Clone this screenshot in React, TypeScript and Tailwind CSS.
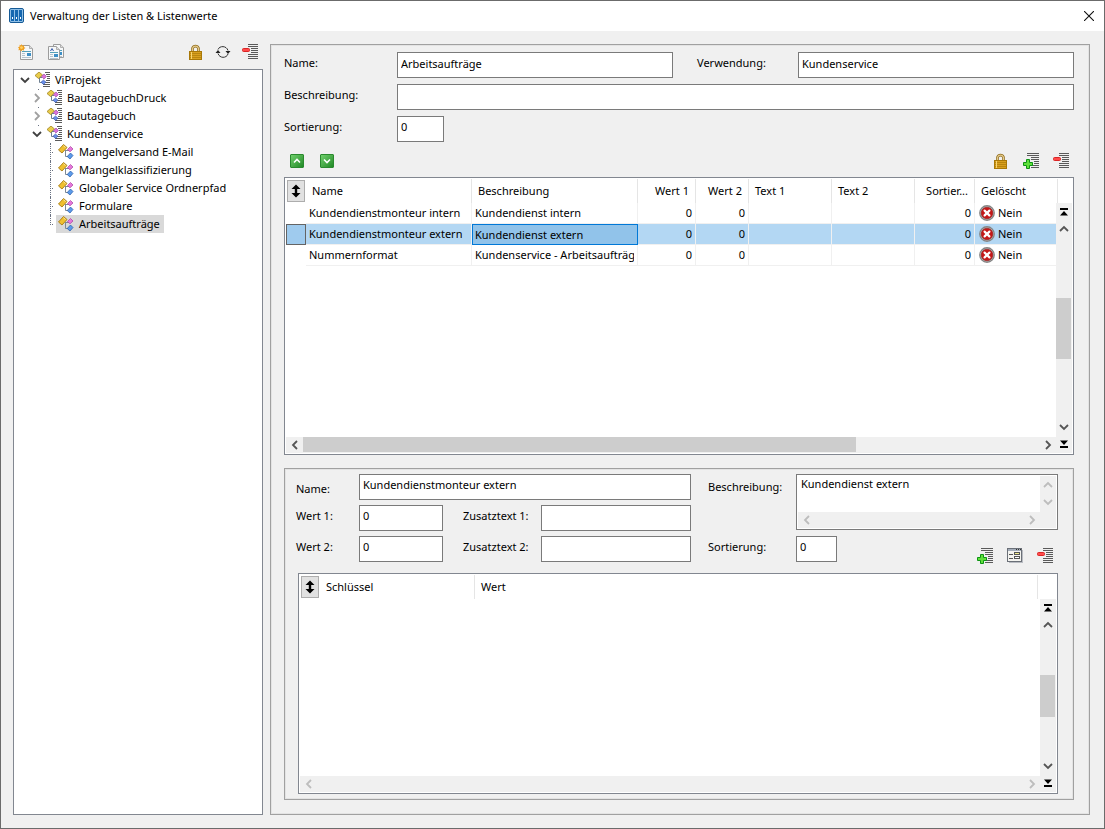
import { FC, ReactNode } from "react";

type Direction = "up" | "down" | "left" | "right";

interface TreeNode {
  label: string;
  level: number;
  open?: boolean;
  active?: boolean;
}

interface ListValue {
  name: string;
  desc: string;
  active?: boolean;
}

const nodes: TreeNode[] = [
  { label: "ViProjekt", level: 0, open: true },
  { label: "BautagebuchDruck", level: 1 },
  { label: "Bautagebuch", level: 1 },
  { label: "Kundenservice", level: 1, open: true },
  { label: "Mangelversand E-Mail", level: 2 },
  { label: "Mangelklassifizierung", level: 2 },
  { label: "Globaler Service Ordnerpfad", level: 2 },
  { label: "Formulare", level: 2 },
  { label: "Arbeitsaufträge", level: 2, active: true },
];

const values: ListValue[] = [
  { name: "Kundendienstmonteur intern", desc: "Kundendienst intern" },
  { name: "Kundendienstmonteur extern", desc: "Kundendienst extern", active: true },
  { name: "Nummernformat", desc: "Kundenservice - Arbeitsaufträge" },
];

/* Icons */

const AppIcon = () => (
  <svg width="16" height="16" viewBox="0 0 16 16">
    <rect x="0.5" y="0.5" width="14" height="14" rx="1.5" fill="#8fbfe6" stroke="#155a96" />
    {[2, 6, 10].map((x) => (
      <g key={x}>
        <rect x={x} y="2" width="3" height="11" fill="#1467b0" />
        <rect x={x + 1} y="9" width="1" height="2" fill="#fff" />
      </g>
    ))}
  </svg>
);

const CloseIcon = () => (
  <svg width="10" height="10" viewBox="0 0 10 10">
    <path d="M0 0L10 10M10 0L0 10" stroke="#111" strokeWidth="1.1" />
  </svg>
);

const Page: FC<{ x: number; y: number; w: number; h: number }> = ({ x, y, w, h }) => (
  <g>
    <path
      d={`M${x + 0.5} ${y + 0.5}h${w - 4}l3 3v${h - 4}h-${w - 1}z`}
      fill="#f6f8f9"
      stroke="#9c9c9c"
    />
    <path d={`M${x + w - 3.5} ${y + 0.5}v3h3`} fill="#ddd" stroke="#b0b0b0" />
    <path d={`M${x + 2} ${y + 6.5}h${w - 4}`} stroke="#56a0b8" />
    <path d={`M${x + 2} ${y + 8.5}h3M${x + 2} ${y + 10.5}h3M${x + 2} ${y + 12.5}h${w - 4}`} stroke="#b5c3cc" />
    <rect x={x + w - 6} y={y + 8} width="4" height="3" fill="#3d8fc6" />
  </g>
);

const NewListIcon = () => (
  <svg width="16" height="16" viewBox="0 0 16 16">
    <Page x={2} y={1} w={13} h={15} />
    <path
      d="M3.5 0L4.4 1.8L6.4 1.2L5.9 3.1L7.5 4L5.9 5L6.2 6.8L4.4 6.1L3.2 7.5L2.4 5.9L0.4 6.2L1 4.4L0 3.2L1.7 2.4L1.5 0.8L2.9 1.4z"
      fill="#f0a020"
    />
    <circle cx="3.5" cy="3.6" r="1.4" fill="#ffd265" />
  </svg>
);

const CopyListIcon = () => (
  <svg width="16" height="16" viewBox="0 0 16 16">
    <Page x={5} y={0} w={11} h={14} />
    <Page x={0} y={2} w={12} h={14} />
    <path d="M2.5 7l1.5-2.5L5.5 7" stroke="#3558a8" fill="none" />
  </svg>
);

const LockIcon = () => (
  <svg width="16" height="16" viewBox="0 0 16 16">
    <path d="M4.5 8V4.2a3.2 3.2 0 0 1 6 0V8" fill="none" stroke="#8f6a1a" strokeWidth="2.6" />
    <path d="M4.5 8V4.2a3.2 3.2 0 0 1 6 0V8" fill="none" stroke="#e2c98a" strokeWidth="1.2" />
    <rect x="1.5" y="7.5" width="12" height="8" fill="#d9a01f" stroke="#a87808" />
    <path d="M2 9.5h11M2 11.5h11M2 13.5h11" stroke="#b9860f" />
    <path d="M3.500 8v7" stroke="#f7d673" />
  </svg>
);

const RefreshIcon = () => (
  <svg width="16" height="16" viewBox="0 0 16 16" fill="none">
    <path d="M3 5.5C4.5 1.5 11.5 1.500 13 6.5M13 10C11.5 14.5 4.5 14.5 3 9.5" stroke="#333" />
    <path d="M10.500 7h5l-2.500 3zM5.500 9h-5l2.500-3z" fill="#222" />
  </svg>
);

// left edge of each line, from the top down
const Lines: FC<{ starts: number[]; end?: number; color?: string }> = ({
  starts,
  end = 16,
  color = "#5a5a5a",
}) => (
  <path d={starts.map((x, i) => `M${x} ${i * 2 + 0.5}H${end}`).join("")} stroke={color} />
);

const RemoveIcon = () => (
  <svg width="16" height="16" viewBox="0 0 16 16">
    <Lines starts={[6, 6, 9, 9, 9, 6, 6, 6]} />
    <rect x="0.5" y="4.5" width="7" height="3" rx="1" fill="#ff4a4a" stroke="#d92626" />
  </svg>
);

const AddIcon = () => (
  <svg width="16" height="16" viewBox="0 0 16 16">
    <Lines starts={[4, 4, 8, 8, 11, 11, 8, 8]} />
    <path
      d="M3.5 6.5h3v3h3v3h-3v3h-3v-3h-3v-3h3z"
      fill="#5fe03a"
      stroke="#0d9414"
      strokeLinejoin="round"
    />
  </svg>
);

const FormIcon = () => (
  <svg width="16" height="16" viewBox="0 0 16 16">
    <rect x="2" y="2" width="14" height="13" fill="#b9bcc2" />
    <rect x="0.5" y="0.5" width="14" height="13" fill="#f4f4f0" stroke="#6b7078" />
    <rect x="1" y="1" width="13" height="2" fill="#a4adba" />
    <path d="M9 1.5h1M11 1.5h1M13 1.5h1" stroke="#333" />
    <path d="M2 6.5h4M2 10.5h4" stroke="#555" />
    <rect x="7.5" y="4.5" width="5" height="2" fill="#f5ef8e" stroke="#555" />
    <rect x="7.5" y="8.500" width="5" height="2" fill="#fff" stroke="#555" />
  </svg>
);

const GroupIcon = () => (
  <svg width="16" height="16" viewBox="0 0 16 16" fill="none">
    <Lines starts={[10, 11, 12, 12, 11, 10, 8, 8]} end={15} />
    <path d="M4.5 6v4.5H7M5 5.5h2" stroke="#6d7f91" />
    <path d="M4 0L7.5 3L3.5 6.5L0 3.5z" fill="#e9cc4a" stroke="#a08420" strokeWidth="0.8" />
    <path d="M9 2L11.5 4.5L9 7L6.5 4.5z" fill="#d873d8" stroke="#9a3fa4" strokeWidth="0.6" />
    <path d="M8.5 8L11 10.2L8.5 12.4L6 10.2z" fill="#6a8ee8" stroke="#3558a8" strokeWidth="0.6" />
  </svg>
);

const LeafIcon = () => (
  <svg width="16" height="16" viewBox="0 0 16 16" fill="none">
    <path d="M7.5 6v6.5H10M7.5 6.5H11" stroke="#7d8894" />
    <path d="M5.5 0.5L9 3.5L4 9L0.5 6z" fill="#efc02f" stroke="#a87c10" strokeWidth="0.9" />
    <path d="M5.5 1.8L7.5 3.5" stroke="#fbe9a0" />
    <path d="M12.5 2.5L15 5L12 7.8L9.5 5.5z" fill="#e678dc" stroke="#a840a0" strokeWidth="0.7" />
    <path d="M12.5 9L15 11.5L12 15L9.2 12.5z" fill="#5c9bea" stroke="#2358a8" strokeWidth="0.7" />
  </svg>
);

const NoIcon = () => (
  <svg width="16" height="16" viewBox="0 0 16 16">
    <circle cx="8" cy="8" r="7.2" fill="#d0d0d0" stroke="#858585" strokeWidth="1.4" />
    <circle cx="8" cy="8" r="5.8" fill="#c41818" stroke="#8d1010" strokeWidth="0.6" />
    <path d="M5.6 5.6L10.4 10.4M10.4 5.6L5.6 10.4" stroke="#fff" strokeWidth="2.2" strokeLinecap="round" />
  </svg>
);

const SortIcon = () => (
  <svg width="10" height="14" viewBox="0 0 10 14">
    <path d="M5 0.5L9.5 5H6.2V9H9.5L5 13.5L0.5 9H3.8V5H0.5z" fill="#000" />
  </svg>
);

const chevrons: Record<Direction, string> = {
  up: "M1 7L5 3L9 7",
  down: "M1 3L5 7L9 3",
  left: "M7 1L3 5L7 9",
  right: "M3 1L7 5L3 9",
};

const Chevron: FC<{ dir: Direction; color?: string }> = ({ dir, color = "#555" }) => (
  <svg width="10" height="10" viewBox="0 0 10 10" fill="none">
    <path d={chevrons[dir]} stroke={color} strokeWidth="1.8" />
  </svg>
);

const EdgeIcon: FC<{ end?: boolean }> = ({ end }) => (
  <svg width="8" height="8" viewBox="0 0 8 8">
    {end ? (
      <path d="M0 0.5h8L4 5zM0 6h8v2H0z" fill="#000" />
    ) : (
      <path d="M0 0h8v2H0zM4 3L8 7.5H0z" fill="#000" />
    )}
  </svg>
);

/* Controls */

const IconButton: FC<{ label: string; children: ReactNode }> = ({ label, children }) => (
  <button type="button" aria-label={label} className="flex size-4 items-center justify-center">
    {children}
  </button>
);

const MoveButton: FC<{ label: string; dir: Direction }> = ({ label, dir }) => (
  <button
    type="button"
    aria-label={label}
    className="flex size-3.5 items-center justify-center rounded-[1px] border border-[#2a8a2e] bg-linear-to-br from-[#6fd06c] to-[#1e8a25]"
  >
    <svg width="10" height="10" viewBox="0 0 10 10" fill="none">
      <path d={dir === "up" ? "M2 6.5L5 3.5L8 6.5" : "M2 3.5L5 6.5L8 3.5"} stroke="#fff" strokeWidth="1.6" />
    </svg>
  </button>
);

interface FieldProps {
  id: string;
  value?: string;
  className?: string;
}

const Field: FC<FieldProps> = ({ id, value = "", className = "w-full pb-1" }) => (
  <input
    id={id}
    type="text"
    defaultValue={value}
    className={`h-[26px] min-w-0 border border-[#7a7a7a] bg-white px-[3px] outline-none ${className}`}
  />
);

const ScrollButton: FC<{ dir: Direction; disabled?: boolean }> = ({ dir, disabled }) => (
  <button
    type="button"
    aria-label={dir}
    disabled={disabled}
    className="flex h-4 w-[15px] shrink-0 items-center justify-center"
  >
    <Chevron dir={dir} color={disabled ? "#bdbdbd" : "#555"} />
  </button>
);

const HorizontalBar: FC<{ disabled?: boolean }> = ({ disabled }) => (
  <div className="flex h-4 bg-[#f0f0f0] px-px">
    <ScrollButton dir="left" disabled={disabled} />
    <div className="flex-1 pl-px">
      {!disabled && <div className="h-[15px] w-3/4 bg-[#cdcdcd]" />}
    </div>
    <ScrollButton dir="right" disabled={disabled} />
  </div>
);

const VerticalBar: FC<{ thumb: string }> = ({ thumb }) => (
  <div className="flex flex-1 flex-col bg-[#f0f0f0]">
    <button type="button" aria-label="Anfang" className="flex h-[18px] items-center justify-center">
      <EdgeIcon />
    </button>
    <ScrollButton dir="up" />
    <div className="flex w-full flex-1 items-center">
      <div className={`w-[15px] bg-[#cdcdcd] ${thumb}`} />
    </div>
    <ScrollButton dir="down" />
    <button type="button" aria-label="Ende" className="flex h-[18px] items-center justify-center">
      <EdgeIcon end />
    </button>
  </div>
);

const SortButton = () => (
  <button
    type="button"
    aria-label="Sortieren"
    className="flex h-[22px] w-[18px] items-center justify-center border border-[#adadad] bg-[#e1e1e1]"
  >
    <SortIcon />
  </button>
);

/* Tree */

const indents = ["pl-1.5", "pl-[18px]", "pl-[36px]"];

const TreeItem: FC<{ node: TreeNode }> = ({ node }) => (
  <li className={`flex h-[18px] items-stretch ${indents[node.level]}`}>
    {node.level < 2 ? (
      <button type="button" aria-label={node.label} className="relative flex w-[15px] items-center">
        {node.level === 1 && <span className="absolute top-0 left-1.5 size-px bg-gray-500" />}
        <Chevron dir={node.open ? "down" : "right"} color={node.open ? "#404040" : "#a0a0a0"} />
      </button>
    ) : (
      <span className="flex w-1.5">
        <span className={`border-l border-dotted border-gray-500 ${node.active ? "h-2.5" : "h-full"}`} />
        <span className="mt-[9px] ml-px size-px bg-gray-500" />
      </span>
    )}
    <span className={`flex items-center gap-1 pr-1 ${node.active ? "bg-[#d9d9d9]" : ""}`}>
      {node.level < 2 ? (
        <GroupIcon />
      ) : (
        <span className="pr-px pl-0.5">
          <LeafIcon />
        </span>
      )}
      <a href="#" className="whitespace-nowrap">
        {node.label}
      </a>
    </span>
  </li>
);

/* Tables */

const th = "border-r border-[#e5e5e5] px-1.5 text-left font-normal";
const td = "overflow-hidden border-r border-b border-[#f0f0f0] px-[3px] whitespace-nowrap";

const ValueTable = () => (
  <div className="flex h-[278px] border border-[#828790] bg-white p-px">
    <div className="flex min-w-0 flex-1 flex-col">
      <table className="w-full table-fixed border-separate border-spacing-0">
        <colgroup>
          <col className="w-5" />
          <col className="w-[166px]" />
          <col className="w-[166px]" />
          <col className="w-[58px]" />
          <col className="w-[53px]" />
          <col className="w-[83px]" />
          <col className="w-[83px]" />
          <col className="w-[60px]" />
          <col />
        </colgroup>
        <thead>
          <tr className="h-6">
            <th className="p-0 pl-px">
              <SortButton />
            </th>
            <th className={th}>Name</th>
            <th className={th}>Beschreibung</th>
            <th className={`${th} text-right`}>Wert 1</th>
            <th className={`${th} text-right`}>Wert 2</th>
            <th className={th}>Text 1</th>
            <th className={th}>Text 2</th>
            <th className={`${th} text-right`}>Sortier...</th>
            <th className="px-1.5 text-left font-normal">Gelöscht</th>
          </tr>
        </thead>
        <tbody>
          {values.map((row) => (
            <tr key={row.name} className={`h-[21px] ${row.active ? "bg-[#b3d7f3]" : ""}`}>
              <td className={row.active ? "border border-[#646464] bg-[#9fcbee] p-0" : "p-0"} />
              <td className={td}>{row.name}</td>
              <td
                className={
                  row.active
                    ? "overflow-hidden border border-[#0078d7] bg-[#91c3ea] px-0.5 whitespace-nowrap"
                    : td
                }
              >
                <div className="overflow-hidden">{row.desc}</div>
              </td>
              <td className={`${td} text-right`}>0</td>
              <td className={`${td} text-right`}>0</td>
              <td className={td} />
              <td className={td} />
              <td className={`${td} text-right`}>0</td>
              <td className="border-b border-[#f0f0f0] px-1">
                <span className="flex items-center gap-[3px]">
                  <NoIcon />
                  Nein
                </span>
              </td>
            </tr>
          ))}
        </tbody>
      </table>
      <div className="flex-1" />
      <HorizontalBar />
    </div>
    <div className="flex w-4 flex-col">
      <div className="ml-px h-6 border-l border-[#e5e5e5]" />
      <VerticalBar thumb="h-[61px]" />
    </div>
  </div>
);

const KeyTable = () => (
  <div className="ml-0.5 flex min-h-[200px] flex-1 border border-[#828790] bg-white p-px">
    <div className="flex min-w-0 flex-1 flex-col">
      <table className="w-full table-fixed border-separate border-spacing-0">
        <colgroup>
          <col className="w-5" />
          <col className="w-[155px]" />
          <col />
          <col className="w-0.5" />
        </colgroup>
        <thead>
          <tr className="h-6">
            <th className="p-0 pl-px">
              <SortButton />
            </th>
            <th className={th}>Schlüssel</th>
            <th className={th}>Wert</th>
            <th className="p-0" />
          </tr>
        </thead>
      </table>
      <div className="flex-1" />
      <HorizontalBar disabled />
    </div>
    <div className="flex w-4 flex-col pt-6">
      <VerticalBar thumb="h-[42px]" />
    </div>
  </div>
);

/* Details of the selected value */

const ValueDetails = () => (
  <section className="mt-[13px] flex flex-1 flex-col border border-[#a0a0a0] pt-[5px] pr-[15px] pb-[5px] pl-[11px] shadow-[inset_0_0_0_1px_#e3e3e3]">
    <div className="flex gap-[17px]">
      <div className="grid flex-1 grid-cols-[63px_84px_98px_minmax(0,1fr)] content-start gap-y-[5px] leading-[22px]">
        <label htmlFor="value-name" className="pt-1">
          Name:
        </label>
        <Field id="value-name" value="Kundendienstmonteur extern" className="col-span-3 pb-1.5" />
        <label htmlFor="value-1">Wert 1:</label>
        <Field id="value-1" value="0" className="pb-1.5" />
        <label htmlFor="extra-1" className="pl-5">
          Zusatztext 1:
        </label>
        <Field id="extra-1" />
        <label htmlFor="value-2">Wert 2:</label>
        <Field id="value-2" value="0" className="pb-1.5" />
        <label htmlFor="extra-2" className="pl-5">
          Zusatztext 2:
        </label>
        <Field id="extra-2" />
      </div>
      <div className="grid w-[350px] grid-cols-[88px_minmax(0,1fr)] grid-rows-[62px_37px] leading-[22px]">
        <label htmlFor="value-desc" className="pt-0.5">
          Beschreibung:
        </label>
        <div className="flex h-14 border border-[#7a7a7a] bg-white p-px">
          <div className="flex flex-1 flex-col">
            <textarea
              id="value-desc"
              defaultValue="Kundendienst extern"
              className="min-h-0 flex-1 resize-none overflow-hidden px-[3px] leading-4 whitespace-nowrap outline-none"
            />
            <HorizontalBar disabled />
          </div>
          <div className="flex w-4 flex-col gap-px bg-[#f0f0f0] pt-px">
            <ScrollButton dir="up" disabled />
            <ScrollButton dir="down" disabled />
          </div>
        </div>
        <label htmlFor="value-sort">Sortierung:</label>
        <div className="flex items-start justify-between pr-[5px]">
          <Field id="value-sort" value="0" className="w-[41px] pb-1.5" />
          <div className="flex gap-3.5 pt-3">
            <IconButton label="Eintrag hinzufügen">
              <AddIcon />
            </IconButton>
            <IconButton label="Eintrag bearbeiten">
              <FormIcon />
            </IconButton>
            <IconButton label="Eintrag entfernen">
              <RemoveIcon />
            </IconButton>
          </div>
        </div>
      </div>
    </div>
    <KeyTable />
  </section>
);

const App = () => {
  return (
    <div className="flex min-h-screen flex-col border border-[#6b6b6b] bg-[#f0f0f0] font-['Noto_Sans',sans-serif] text-[11px] leading-4 text-black">
      {/* Title bar */}
      <header className="flex h-[30px] items-center gap-[5px] bg-white pr-2.5 pl-2">
        <AppIcon />
        <h1 className="flex-1">Verwaltung der Listen &amp; Listenwerte</h1>
        <button type="button" aria-label="Schließen">
          <CloseIcon />
        </button>
      </header>

      <main className="flex flex-1 gap-[7px] pt-[13px] pr-3.5 pb-[13px] pl-3">
        {/* Lists */}
        <aside className="flex w-[250px] shrink-0 flex-col">
          <div className="flex h-[25px] items-start justify-between px-[5px]">
            <div className="flex gap-3.5">
              <IconButton label="Neue Liste">
                <NewListIcon />
              </IconButton>
              <IconButton label="Liste kopieren">
                <CopyListIcon />
              </IconButton>
            </div>
            <div className="flex gap-[11px]">
              <IconButton label="Sperren">
                <LockIcon />
              </IconButton>
              <IconButton label="Aktualisieren">
                <RefreshIcon />
              </IconButton>
              <IconButton label="Liste entfernen">
                <RemoveIcon />
              </IconButton>
            </div>
          </div>
          <ul className="flex-1 border border-[#828790] bg-white pt-px">
            {nodes.map((node) => (
              <TreeItem key={node.label} node={node} />
            ))}
          </ul>
        </aside>

        {/* Selected list */}
        <section className="flex min-w-0 flex-1 flex-col border border-[#a0a0a0] pt-[7px] pr-[15px] pb-3.5 pl-[13px] shadow-[inset_0_0_0_1px_#e3e3e3]">
          <div className="grid grid-cols-[113px_minmax(0,1fr)_125px_minmax(0,1fr)] gap-y-1.5 leading-[22px]">
            <label htmlFor="list-name">Name:</label>
            <Field id="list-name" value="Arbeitsaufträge" />
            <label htmlFor="list-usage" className="pl-6">
              Verwendung:
            </label>
            <Field id="list-usage" value="Kundenservice" />
            <label htmlFor="list-desc">Beschreibung:</label>
            <Field id="list-desc" className="col-span-3" />
            <label htmlFor="list-sort">Sortierung:</label>
            <Field id="list-sort" value="0" className="w-[47px] pb-1.5" />
          </div>
          <div className="flex h-[35px] items-center gap-3.5 pt-0.5 pr-[5px] pl-1.5">
            <div className="flex flex-1 gap-4">
              <MoveButton label="Nach oben" dir="up" />
              <MoveButton label="Nach unten" dir="down" />
            </div>
            <IconButton label="Wert sperren">
              <LockIcon />
            </IconButton>
            <IconButton label="Wert hinzufügen">
              <AddIcon />
            </IconButton>
            <IconButton label="Wert entfernen">
              <RemoveIcon />
            </IconButton>
          </div>
          <ValueTable />
          <ValueDetails />
        </section>
      </main>
    </div>
  );
};

export default App;
